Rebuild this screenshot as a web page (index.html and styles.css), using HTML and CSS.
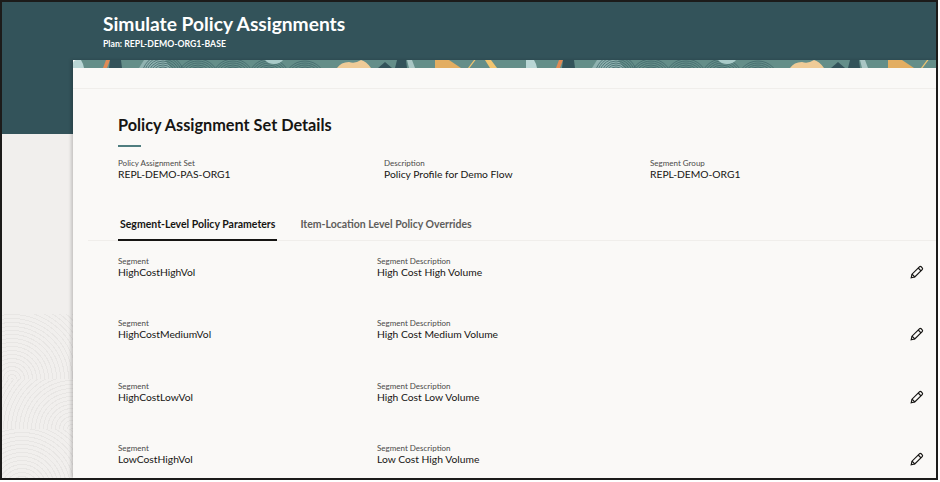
FILE: index.html
```html
<!DOCTYPE html>
<html lang="en">

<head>
    <meta charset="UTF-8">
    <title>Simulate Policy Assignments</title>
    <link rel="stylesheet" href="styles.css">
</head>

<body>
    <svg class="defs" width="0" height="0">
        <defs>
            <g id="rings" fill="none" stroke="#3f6669" stroke-width="0.8">
                <circle r="3"></circle>
                <circle r="5"></circle>
                <circle r="7"></circle>
                <circle r="9"></circle>
                <circle r="11"></circle>
                <circle r="13"></circle>
                <circle r="15"></circle>
                <circle r="17"></circle>
                <circle r="19"></circle>
                <circle r="21"></circle>
            </g>
            <g id="pencil" fill="none" stroke="#161513" stroke-width="1.2">
                <path d="M1.2 12.8l.8-3.6 7.4-7.4a1.3 1.3 0 0 1 1.8 0l1 1a1.3 1.3 0 0 1 0 1.8l-7.4 7.4z"></path>
                <path d="M8.2 3l2.8 2.8M2 9.2l2.8 2.8"></path>
            </g>
        </defs>
    </svg>

    <div class="frame">
        <div class="side">
            <div class="side-top"></div>
            <div class="side-art"></div>
        </div>

        <div class="main">
            <div class="header">
                <h1>Simulate Policy Assignments</h1>
                <p>Plan: REPL-DEMO-ORG1-BASE</p>
            </div>

            <div class="card">
                <svg class="strip" width="863" height="8">
                    <defs>
                        <pattern id="leaves" width="453" height="8" patternUnits="userSpaceOnUse">
                            <rect width="453" height="8" fill="#648e89"></rect>
                            <path d="M0 8V0h8q2 3 3 8z" fill="#b9d6d5"></path>
                            <path d="M30 8l3-8h4l-3 8z" fill="#e08a55"></path>
                            <path d="M37 0h11l1 8H36z" fill="#33535a"></path>
                            <path d="M66 8l5-8h21l6 8z" fill="#8fb2b0"></path>
                            <use href="#rings" x="90" y="16"></use>
                            <use href="#rings" x="125" y="20"></use>
                            <use href="#rings" x="160" y="20"></use>
                            <use href="#rings" x="196" y="20"></use>
                            <use href="#rings" x="232" y="22"></use>
                            <path d="M192 0h18q-3 4-9 4t-9-4z" fill="#a9cbc9"></path>
                            <path d="M264 8q4-6 12-6 6 2 12-2 5 1 10 8z" fill="#efcb97"></path>
                            <path d="M305 8l7-6 7 6z" fill="#33535a"></path>
                            <path d="M322 8l2-8h9l1 8z" fill="#33535a"></path>
                            <path d="M334 0h5l3 8h-6z" fill="#a9c6c4"></path>
                            <path d="M362 8V0h14l12 8z" fill="#e3ae62"></path>
                            <path d="M395 8l6-8h1.500l-6 8z" fill="#f0c470"></path>
                            <path d="M412 0h6l6 8h-7z" fill="#f0c470"></path>
                        </pattern>
                    </defs>
                    <rect width="863" height="8" fill="url(#leaves)"></rect>
                </svg>

                <div class="card-body">
                    <div class="card-top"></div>

                    <h2>Policy Assignment Set Details</h2>
                    <div class="rule"></div>

                    <div class="details">
                        <div class="field">
                            <label>Policy Assignment Set</label>
                            <span>REPL-DEMO-PAS-ORG1</span>
                        </div>
                        <div class="field">
                            <label>Description</label>
                            <span>Policy Profile for Demo Flow</span>
                        </div>
                        <div class="field">
                            <label>Segment Group</label>
                            <span>REPL-DEMO-ORG1</span>
                        </div>
                    </div>

                    <div class="tabs">
                        <a class="tab active">Segment-Level Policy Parameters</a>
                        <a class="tab">Item-Location Level Policy Overrides</a>
                    </div>

                    <div class="row">
                        <div class="field seg">
                            <label>Segment</label>
                            <span>HighCostHighVol</span>
                        </div>
                        <div class="field desc">
                            <label>Segment Description</label>
                            <span>High Cost High Volume</span>
                        </div>
                        <svg class="edit" width="14" height="14"><use href="#pencil"></use></svg>
                    </div>

                    <div class="row">
                        <div class="field seg">
                            <label>Segment</label>
                            <span>HighCostMediumVol</span>
                        </div>
                        <div class="field desc">
                            <label>Segment Description</label>
                            <span>High Cost Medium Volume</span>
                        </div>
                        <svg class="edit" width="14" height="14"><use href="#pencil"></use></svg>
                    </div>

                    <div class="row">
                        <div class="field seg">
                            <label>Segment</label>
                            <span>HighCostLowVol</span>
                        </div>
                        <div class="field desc">
                            <label>Segment Description</label>
                            <span>High Cost Low Volume</span>
                        </div>
                        <svg class="edit" width="14" height="14"><use href="#pencil"></use></svg>
                    </div>

                    <div class="row">
                        <div class="field seg">
                            <label>Segment</label>
                            <span>LowCostHighVol</span>
                        </div>
                        <div class="field desc">
                            <label>Segment Description</label>
                            <span>Low Cost High Volume</span>
                        </div>
                        <svg class="edit" width="14" height="14"><use href="#pencil"></use></svg>
                    </div>
                </div>
            </div>
        </div>
    </div>
</body>

</html>
```

FILE: styles.css
```css
* {
    margin: 0;
    padding: 0;
    box-sizing: border-box;
}

html,
body {
    background-color: #fff;
}

body {
    width: 940px;
    height: 482px;
    overflow: hidden;
    font-family: "Lato", "Liberation Sans", sans-serif;
    color: #161513;
}

.defs {
    display: block;
    height: 0;
}

.frame {
    display: flex;
    width: 938px;
    height: 480px;
    border: 2px solid #1c1b1a;
    overflow: hidden;
    background-color: #33535a;
}

/* left gutter */
.side {
    display: flex;
    flex-direction: column;
    width: 71px;
    flex: none;
}

.side-top {
    height: 132px;
    background-color: #33535a;
}

.side-art {
    flex: 1;
    background-color: #f1efed;
    background-image:
        repeating-radial-gradient(circle at 10px 65px, #e8e6e4 0 1px, transparent 1px 4px),
        repeating-radial-gradient(circle at 70px 50px, #e8e6e4 0 1px, transparent 1px 4px),
        repeating-radial-gradient(circle at 20px 60px, #e8e6e4 0 1px, transparent 1px 4px);
    background-size: 71px 65px, 71px 50px, 71px 50px;
    background-position: 0 180px, 0 245px, 0 295px;
    background-repeat: no-repeat;
}

.main {
    flex: 1;
    min-width: 0;
    display: flex;
    flex-direction: column;
}

.header {
    flex: none;
    height: 58px;
    padding: 11px 0 0 30px;
    color: #fff;
}

.header h1 {
    font-size: 19.200px;
    font-weight: 700;
    line-height: 22px;
}

.header p {
    font-size: 8.700px;
    font-weight: 700;
    line-height: 12px;
    margin-top: 3px;
}

.card {
    flex: 1;
    min-height: 0;
    box-shadow: -2px 0 3px rgba(0, 0, 0, 0.18);
    background-color: #faf9f7;
}

.strip {
    display: block;
    border-top-left-radius: 4px;
}

.card-top {
    height: 21px;
    margin-bottom: 25px;
    border-bottom: 1px solid #f0eeeb;
}

h2 {
    margin-left: 45px;
    font-size: 16.300px;
    font-weight: 700;
    line-height: 22px;
}

.rule {
    width: 23px;
    height: 2px;
    margin: 9px 0 0 45px;
    background-color: #4f7d7f;
}

.details {
    display: flex;
    margin: 11px 0 0 45px;
}

.details .field {
    width: 266px;
}

.field label {
    display: block;
    font-size: 8px;
    line-height: 10px;
    color: #4b4a48;
}

.field span {
    display: block;
    font-size: 10.300px;
    line-height: 13px;
}

.tabs {
    display: flex;
    gap: 21px;
    height: 35px;
    margin: 25px 0 0 15px;
    padding-left: 30px;
    border-bottom: 1px solid #f0eeeb;
}

.tab {
    height: 35px;
    padding: 0 2px;
    font-size: 10.500px;
    font-weight: 700;
    line-height: 36px;
    color: #5e5d5b;
}

.tab.active {
    color: #161513;
    border-bottom: 2px solid #161513;
}

.row {
    display: flex;
    align-items: flex-start;
    height: 62.330px;
    padding: 15px 12px 0 45px;
}

.row .seg {
    width: 259px;
}

.row .desc {
    flex: 1;
}

.edit {
    margin-top: 9px;
}
```
